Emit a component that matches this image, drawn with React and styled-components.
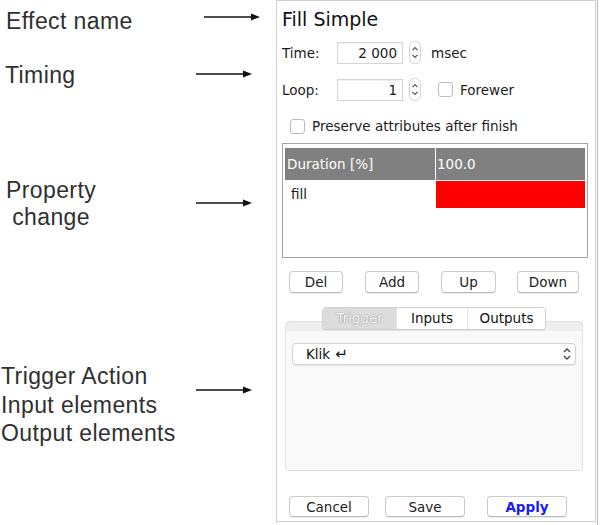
import React from "react";
import styled, { createGlobalStyle } from "styled-components";

const GlobalStyle = createGlobalStyle`
  html, body {
    margin: 0;
    padding: 0;
    background: #fff;
  }
  body {
    font-family: "DejaVu Sans", Verdana, sans-serif;
  }
`;

const Page = styled.div`
  display: flex;
  width: 600px;
  height: 525px;
  overflow: hidden;
  background: #fff;
`;

/* left hand annotations */
const Notes = styled.div`
  width: 276px;
  flex: none;
  display: flex;
  flex-direction: column;
  font-family: "Liberation Sans", Arial, sans-serif;
  font-size: 23px;
  letter-spacing: 0.4px;
  color: #303030;
`;

const Note = styled.div`
  display: flex;
  align-items: flex-start;
  margin-top: ${(p) => p.$top}px;
  padding-left: ${(p) => p.$left ?? 6}px;
`;

const NoteText = styled.div`
  line-height: ${(p) => p.$lh ?? 28}px;
  text-align: ${(p) => p.$align ?? "left"};
`;

const ArrowSvg = styled.svg`
  flex: none;
  margin-left: auto;
  margin-right: ${(p) => p.$right}px;
  margin-top: ${(p) => p.$dy}px;
`;

function Arrow({ right, dy }) {
  return (
    <ArrowSvg width="56" height="10" viewBox="0 0 56 10" $right={right} $dy={dy}>
      <line x1="0" y1="5" x2="49" y2="5" stroke="#111" strokeWidth="1.6" />
      <polygon points="47,1.5 56,5 47,8.5" fill="#111" />
    </ArrowSvg>
  );
}

/* the dialog */
const Panel = styled.div`
  box-sizing: border-box;
  width: 320px;
  height: 522px;
  flex: none;
  border: 1px solid #cfcfcf;
  padding: 7px 7px 0 5px;
  display: flex;
  flex-direction: column;
  font-size: 13.5px;
  color: #1c1c1c;
`;

const Edge = styled.div`
  flex: none;
  width: 2px;
  margin-left: 1px;
  border-left: 1px solid #b8b8b8;
`;

const Title = styled.div`
  font-size: 19px;
  line-height: 22px;
  color: #111;
`;

const FieldRow = styled.div`
  display: flex;
  align-items: center;
  height: ${(p) => p.$h ?? 23}px;
  margin-top: ${(p) => p.$top}px;
  padding-left: ${(p) => p.$pad ?? 0}px;
`;

const Label = styled.span`
  width: 55px;
  flex: none;
`;

const NumberBox = styled.div`
  box-sizing: border-box;
  width: 66px;
  height: 22px;
  flex: none;
  border: 1px solid #d6d6d6;
  box-shadow: inset 0 1px 0 #f0f0f0;
  background: #fff;
  text-align: right;
  padding-right: 5px;
  line-height: 20px;
`;

const SpinSvg = styled.svg`
  flex: none;
  margin-left: 6px;
`;

function Spinner() {
  return (
    <SpinSvg width="12" height="23" viewBox="0 0 12 23">
      <rect x="0.5" y="0.5" width="11" height="22" rx="5" fill="#fff" stroke="#d2d2d2" />
      <path d="M3.5 9.2 L6 6.6 L8.5 9.2" fill="none" stroke="#555" strokeWidth="1.2" />
      <path d="M3.5 13.8 L6 16.4 L8.5 13.8" fill="none" stroke="#555" strokeWidth="1.2" />
    </SpinSvg>
  );
}

const Text = styled.span`
  margin-left: ${(p) => p.$ml ?? 0}px;
  white-space: nowrap;
`;

const Check = styled.span`
  box-sizing: border-box;
  width: 15px;
  height: 15px;
  flex: none;
  margin-left: ${(p) => p.$ml ?? 0}px;
  border: 1px solid #bdbdbd;
  border-radius: 3px;
  background: #fff;
`;

const Table = styled.div`
  box-sizing: border-box;
  height: 115px;
  margin-top: 9px;
  border: 1px solid #a3a3a3;
  padding: 4px 2px 0;
  background: #fff;
`;

const TRow = styled.div`
  display: grid;
  grid-template-columns: 150px 1fr;
  height: ${(p) => p.$h}px;
`;

const HeadCell = styled.div`
  background: #808080;
  color: #fff;
  line-height: 32px;
  padding-left: ${(p) => (p.$second ? 1 : 2)}px;
  border-left: ${(p) => (p.$second ? "1px solid #fff" : "none")};
`;

const Cell = styled.div`
  margin-top: 1px;
  line-height: 27px;
  padding-left: 6px;
  background: ${(p) => p.$bg ?? "transparent"};
  border-left: ${(p) => (p.$second ? "1px solid #fff" : "none")};
`;

const ButtonRow = styled.div`
  display: flex;
  margin-top: ${(p) => p.$top}px;
  padding-left: 7px;
  gap: ${(p) => p.$gap}px;
`;

const Button = styled.button`
  box-sizing: border-box;
  width: ${(p) => p.$w}px;
  height: ${(p) => p.$h ?? 22}px;
  margin-left: ${(p) => p.$ml ?? 0}px;
  padding: 0;
  border: 1px solid #cbcbcb;
  border-bottom-color: #b9b9b9;
  border-radius: 4px;
  background: #fff;
  box-shadow: 0 1px 1px rgba(0, 0, 0, 0.07);
  font: inherit;
  font-size: 13.5px;
  color: ${(p) => (p.$primary ? "#1c1cec" : "#1c1c1c")};
  font-weight: ${(p) => (p.$primary ? "bold" : "normal")};
`;

const TabBar = styled.div`
  position: relative;
  z-index: 1;
  align-self: center;
  display: flex;
  height: 23px;
  margin-top: 14px;
  margin-right: 2px;
  box-sizing: border-box;
  border: 1px solid #d0d0d0;
  border-radius: 4px;
  background: #fff;
  box-shadow: 0 1px 1px rgba(0, 0, 0, 0.06);
  overflow: hidden;
`;

const Tab = styled.div`
  width: ${(p) => p.$w}px;
  text-align: center;
  line-height: 21px;
  border-left: ${(p) => (p.$first ? "none" : "1px solid #e4e4e4")};
  background: ${(p) => (p.$active ? "#dcdcdc" : "#fff")};
  color: ${(p) => (p.$active ? "#f8f8f8" : "#111")};
  text-shadow: ${(p) => (p.$active ? "0 0 1px #8c8c8c, 0 0 1px #8c8c8c" : "none")};
`;

const Pane = styled.div`
  box-sizing: border-box;
  height: 150px;
  margin: -9px 5px 0 3px;
  padding: 21px 6px 0;
  border: 1px solid #e2e2e2;
  border-radius: 4px;
  background: linear-gradient(#efefef 0, #efefef 9px, #f9f9f9 9px);
`;

const Combo = styled.div`
  box-sizing: border-box;
  height: 22px;
  display: flex;
  align-items: center;
  padding-left: 13px;
  border: 1px solid #d4d4d4;
  border-radius: 4px;
  background: #fff;
  box-shadow: 0 1px 1px rgba(0, 0, 0, 0.08);
  color: #111;
`;

const ReturnGlyph = styled.span`
  margin-left: 5px;
  font-size: 15px;
  line-height: 1;
`;

const ComboSvg = styled.svg`
  flex: none;
  margin-left: auto;
  margin-right: 3px;
`;

function UpDown() {
  return (
    <ComboSvg width="10" height="16" viewBox="0 0 10 16">
      <path d="M2 6 L5 3 L8 6" fill="none" stroke="#444" strokeWidth="1.3" />
      <path d="M2 10 L5 13 L8 10" fill="none" stroke="#444" strokeWidth="1.3" />
    </ComboSvg>
  );
}

export default function App() {
  return (
    <Page>
      <GlobalStyle />
      <Notes>
        <Note $top={7}>
          <NoteText>Effect name</NoteText>
          <Arrow right={16} dy={5} />
        </Note>
        <Note $top={26} $left={5}>
          <NoteText>Timing</NoteText>
          <Arrow right={24} dy={8} />
        </Note>
        <Note $top={88}>
          <NoteText $lh={27} $align="center">
            Property
            <br />
            change
          </NoteText>
          <Arrow right={24} dy={21} />
        </Note>
        <Note $top={131} $left={1}>
          <NoteText $lh={28.5}>
            Trigger Action
            <br />
            Input elements
            <br />
            Output elements
          </NoteText>
          <Arrow right={24} dy={23} />
        </Note>
      </Notes>

      <Panel>
        <Title>Fill Simple</Title>

        <FieldRow $top={11}>
          <Label>Time:</Label>
          <NumberBox>2 000</NumberBox>
          <Spinner />
          <Text $ml={10}>msec</Text>
        </FieldRow>

        <FieldRow $top={14}>
          <Label>Loop:</Label>
          <NumberBox>1</NumberBox>
          <Spinner />
          <Check $ml={17} />
          <Text $ml={7}>Forewer</Text>
        </FieldRow>

        <FieldRow $top={17} $h={16} $pad={8}>
          <Check />
          <Text $ml={7}>Preserve attributes after finish</Text>
        </FieldRow>

        <Table>
          <TRow $h={32}>
            <HeadCell>Duration [%]</HeadCell>
            <HeadCell $second>100.0</HeadCell>
          </TRow>
          <TRow $h={28}>
            <Cell>fill</Cell>
            <Cell $second $bg="#ff0000" />
          </TRow>
        </Table>

        <ButtonRow $top={13} $gap={22}>
          <Button $w={54}>Del</Button>
          <Button $w={54}>Add</Button>
          <Button $w={55}>Up</Button>
          <Button $w={62} $ml={-1}>Down</Button>
        </ButtonRow>

        <TabBar>
          <Tab $w={73} $first $active>Trigger</Tab>
          <Tab $w={70}>Inputs</Tab>
          <Tab $w={77}>Outputs</Tab>
        </TabBar>
        <Pane>
          <Combo>
            Klik<ReturnGlyph>↵</ReturnGlyph>
            <UpDown />
          </Combo>
        </Pane>

        <ButtonRow $top={25} $gap={16}>
          <Button $w={80} $h={21}>Cancel</Button>
          <Button $w={80} $h={21}>Save</Button>
          <Button $w={80} $h={21} $ml={6} $primary>Apply</Button>
        </ButtonRow>
      </Panel>
      <Edge />
    </Page>
  );
}
